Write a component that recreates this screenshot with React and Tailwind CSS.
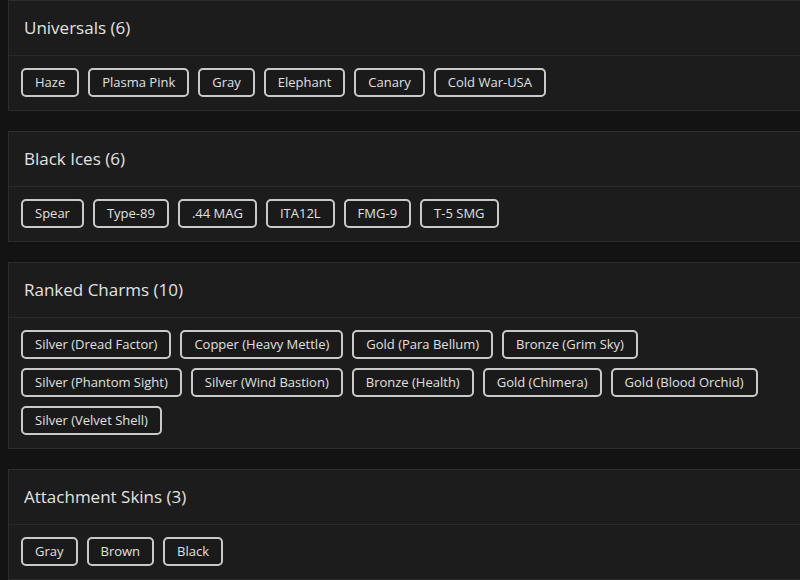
import React from "react";

const sections = [
  { title: "Universals (6)", items: ["Haze", "Plasma Pink", "Gray", "Elephant", "Canary", "Cold War-USA"] },
  { title: "Black Ices (6)", items: ["Spear", "Type-89", ".44 MAG", "ITA12L", "FMG-9", "T-5 SMG"] },
  {
    title: "Ranked Charms (10)",
    items: [
      "Silver (Dread Factor)",
      "Copper (Heavy Mettle)",
      "Gold (Para Bellum)",
      "Bronze (Grim Sky)",
      "Silver (Phantom Sight)",
      "Silver (Wind Bastion)",
      "Bronze (Health)",
      "Gold (Chimera)",
      "Gold (Blood Orchid)",
      "Silver (Velvet Shell)",
    ],
  },
  { title: "Attachment Skins (3)", items: ["Gray", "Brown", "Black"] },
];

function Section({ title, items }) {
  return (
    <div className="ml-2 w-[796px] shrink-0 border border-[#2c2c2c] bg-[#1c1c1c]">
      <div className="h-[55px] flex items-center px-[15px] pb-[1px] border-b border-[#2a2a2a]">
        <h2 className="text-[17px] font-medium text-[#e2e2e2] leading-none">{title}</h2>
      </div>
      <div className="px-3 pt-3 pb-[13px] flex flex-wrap gap-x-[9px] gap-y-[9px]">
        {items.map((it, i) => (
          <span
            key={i}
            className="h-[29px] flex items-center px-3 rounded-[5px] border-2 border-[#c9c9c9] bg-[#1a1a1a] text-[13px] text-[#e0e0e0] leading-none whitespace-nowrap"
          >
            {it}
          </span>
        ))}
      </div>
    </div>
  );
}

export default function App() {
  return (
    <div
      className="w-[800px] h-[580px] overflow-hidden bg-[#131313] flex flex-col gap-5"
      style={{ fontFamily: '"Open Sans", "Noto Sans", sans-serif' }}
    >
      {sections.map((s, i) => (
        <Section key={i} {...s} />
      ))}
    </div>
  );
}
